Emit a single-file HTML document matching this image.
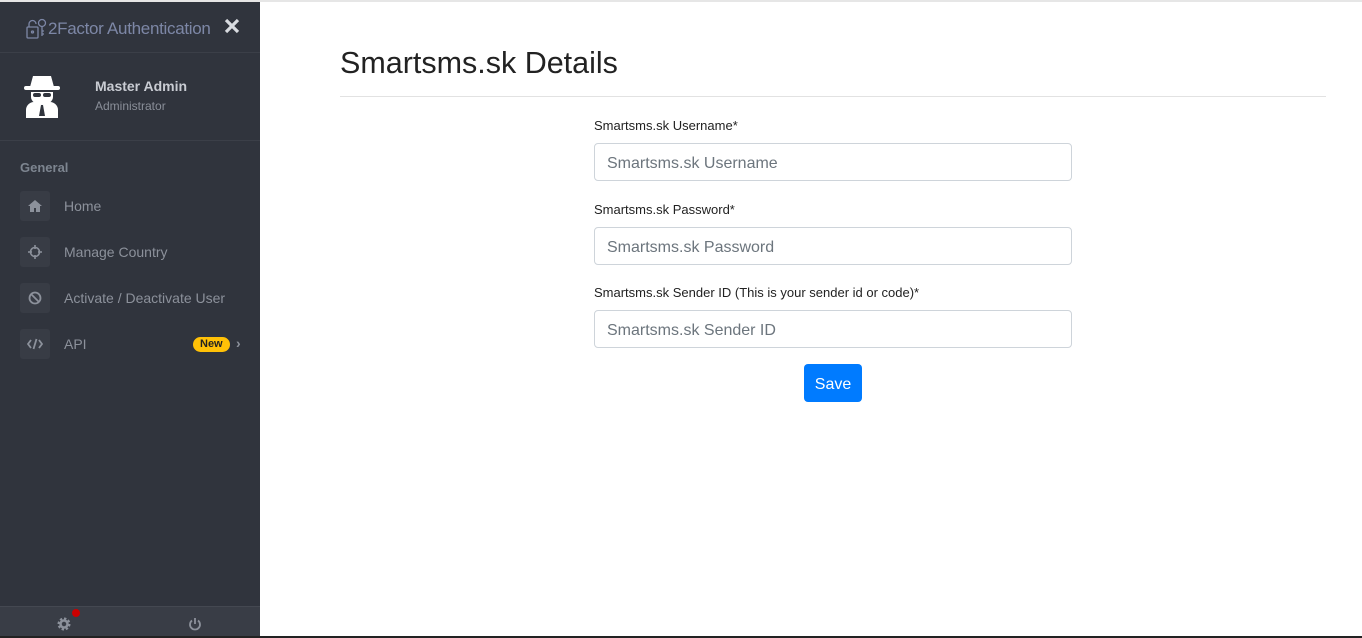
<!DOCTYPE html>
<html><head><meta charset="utf-8"><style>
*{box-sizing:border-box;margin:0;padding:0}
body{width:1362px;height:638px;overflow:hidden;background:#fff;font-family:"Liberation Sans",sans-serif;position:relative}
#top{position:absolute;left:0;top:0;width:1362px;height:2px;background:#e6e6e6}
#sb{position:absolute;left:0;top:2px;width:260px;height:634px;background:#30343d}
#bottom{position:absolute;left:0;top:636px;width:1362px;height:2px;background:#222}
.logo{position:absolute;left:26px;top:16px;color:#7d87a6;font-size:17px;display:flex;align-items:center;letter-spacing:-0.3px}
.x{position:absolute;left:224px;top:16px}
.hr{position:absolute;left:0;top:50px;width:260px;height:1px;background:#3b3f48}
.hr2{top:138px}
.name{position:absolute;left:95px;top:76px;color:#c9ccd3;font-weight:bold;font-size:14px}
.role{position:absolute;left:95px;top:97px;color:#8a8f99;font-size:12px}
.gen{position:absolute;left:20px;top:158px;color:#7d8590;font-weight:bold;font-size:13px}
.item{position:absolute;left:20px;width:240px;height:30px;display:flex;align-items:center}
.ic{width:30px;height:30px;background:#383c45;border-radius:3px;display:flex;align-items:center;justify-content:center}
.item span{margin-left:14px;color:#8c919b;font-size:14px}
.badge{position:absolute;left:173px;top:8px;background:#ffc107;color:#222;font-size:11px;font-weight:bold;border-radius:8px;padding:1px 7px;height:15px;line-height:13px}
.chev{position:absolute;left:216px;top:6px;color:#8c919b;font-size:14px;font-weight:bold}
.foot{position:absolute;left:0;top:604px;width:260px;height:32px;background:#393d46;border-top:1px solid #444851}
h1{position:absolute;left:340px;top:46px;font-weight:normal;font-size:30.5px;color:#222}
.line{position:absolute;left:340px;top:96px;width:986px;height:1px;background:#e2e2e2}
label{position:absolute;left:594px;font-size:13px;color:#222}
.inp{position:absolute;left:594px;width:478px;height:38px;border:1px solid #ced4da;border-radius:4px;color:#6c757d;font-size:16px;padding:11px 12px 0}
.btn{position:absolute;left:804px;top:364px;width:58px;height:38px;background:#007bff;color:#fff;border-radius:4px;font-size:16px;text-align:center;line-height:42px}
</style></head><body>
<div id="top"></div>
<div id="sb">
 <div class="logo"><svg width="22" height="22" viewBox="0 0 22 22" fill="none" stroke="#7d87a6" stroke-width="1.3"><rect x="1" y="9" width="11" height="11" rx="1"/><path d="M3 9V6a3.5 3.5 0 0 1 7 0"/><circle cx="16" cy="5" r="3.5"/><path d="M16 8.5V18M16 13h2M16 16h2"/><circle cx="6.5" cy="14" r="1"/></svg>2Factor Authentication</div>
 <svg class="x" width="16" height="16" viewBox="0 0 16 16"><path d="M2 2L14 14M14 2L2 14" stroke="#d8dbe0" stroke-width="3.2"/></svg>
 <div class="hr"></div>
 <svg style="position:absolute;left:22px;top:72px" width="40" height="44" viewBox="0 0 40 44" fill="#fff"><path d="M11 2h18l3 11H8z"/><rect x="2" y="12" width="36" height="4" rx="2"/><path d="M9 18h22v5a11 8 0 0 1-22 0z"/><rect x="11" y="19" width="8" height="4" rx="2" fill="#30343d"/><rect x="21" y="19" width="8" height="4" rx="2" fill="#30343d"/><path d="M4 44v-8a8 8 0 0 1 8-8h4l4 4 4-4h4a8 8 0 0 1 8 8v8z"/><path d="M19 31l-2 11h6l-2-11z" fill="#30343d"/></svg>
 <div class="name">Master Admin</div><div class="role">Administrator</div>
 <div class="hr hr2"></div>
 <div class="gen">General</div>
 <div class="item" style="top:189px"><div class="ic"><svg width="14" height="12" viewBox="0 0 14 12" fill="#8c919b"><path d="M7 0L0 6h2v6h4V8h2v4h4V6h2z"/></svg></div><span>Home</span></div>
 <div class="item" style="top:235px"><div class="ic"><svg width="14" height="14" viewBox="0 0 14 14" fill="none" stroke="#8c919b" stroke-width="1.6"><circle cx="7" cy="7" r="4.5"/><path d="M7 0v4M7 10v4M0 7h4M10 7h4"/></svg></div><span>Manage Country</span></div>
 <div class="item" style="top:281px"><div class="ic"><svg width="14" height="14" viewBox="0 0 14 14" fill="none" stroke="#8c919b" stroke-width="1.8"><circle cx="7" cy="7" r="5.5"/><path d="M3 3l8 8"/></svg></div><span>Activate / Deactivate User</span></div>
 <div class="item" style="top:327px"><div class="ic"><svg width="16" height="12" viewBox="0 0 16 12" fill="none" stroke="#8c919b" stroke-width="1.8"><path d="M4 2L1 6l3 4M12 2l3 4-3 4M9.5 1L6.5 11"/></svg></div><span>API</span><div class="badge">New</div><div class="chev">›</div></div>
 <div class="foot">
  <svg style="position:absolute;left:57px;top:10px" width="14" height="14" viewBox="0 0 14 14"><circle cx="7" cy="7" r="5" fill="none" stroke="#8c919b" stroke-width="3" stroke-dasharray="2.2 1.7"/><circle cx="7" cy="7" r="3.5" fill="none" stroke="#8c919b" stroke-width="2.5"/></svg>
  <div style="position:absolute;left:72px;top:2px;width:8px;height:8px;border-radius:50%;background:#c00"></div>
  <svg style="position:absolute;left:188px;top:10px" width="14" height="14" viewBox="0 0 14 14" fill="none" stroke="#8c919b" stroke-width="1.8"><path d="M4 3.5a5 5 0 1 0 6 0M7 1v6"/></svg>
 </div>
</div>
<div id="bottom"></div>
<h1>Smartsms.sk Details</h1>
<div class="line"></div>
<label style="top:118px">Smartsms.sk Username*</label>
<div class="inp" style="top:143px">Smartsms.sk Username</div>
<label style="top:202px">Smartsms.sk Password*</label>
<div class="inp" style="top:227px">Smartsms.sk Password</div>
<label style="top:285px">Smartsms.sk Sender ID (This is your sender id or code)*</label>
<div class="inp" style="top:310px">Smartsms.sk Sender ID</div>
<div class="btn">Save</div>
</body></html>
